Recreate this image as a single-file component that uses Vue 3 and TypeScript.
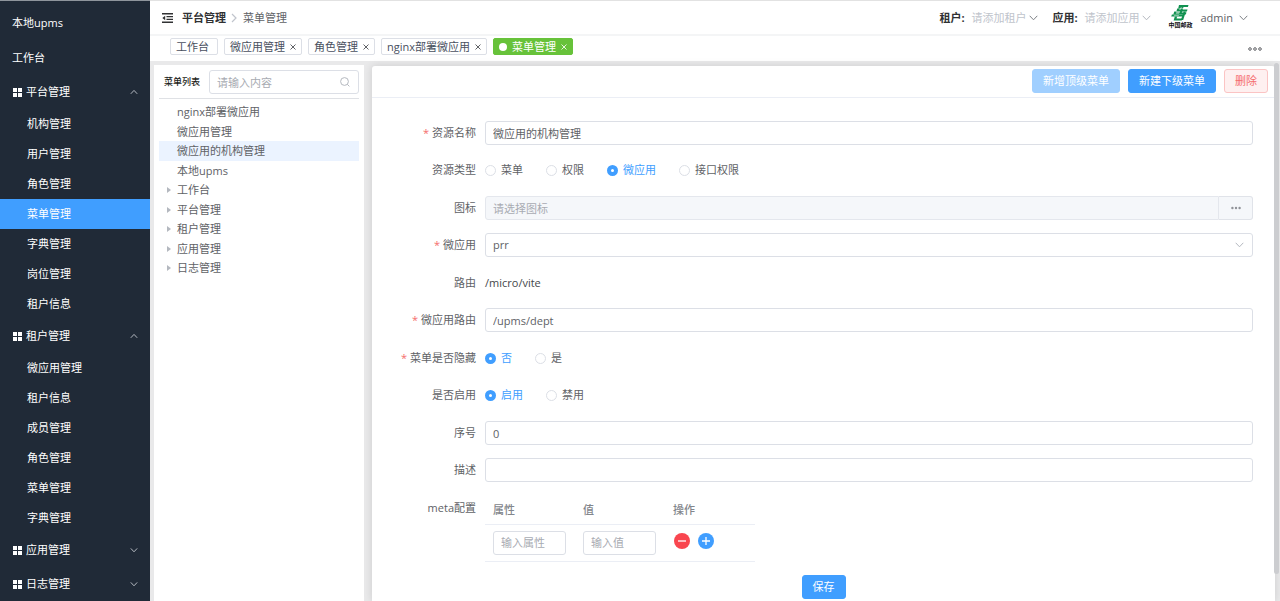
<script setup lang="ts">
import { ref } from 'vue'

interface MenuGroup {
  title: string
  open: boolean
  children: string[]
}

interface TreeItem {
  label: string
  branch: boolean
}

const groups = ref<MenuGroup[]>([
  {
    title: '平台管理',
    open: true,
    children: ['机构管理', '用户管理', '角色管理', '菜单管理', '字典管理', '岗位管理', '租户信息'],
  },
  {
    title: '租户管理',
    open: true,
    children: ['微应用管理', '租户信息', '成员管理', '角色管理', '菜单管理', '字典管理'],
  },
  { title: '应用管理', open: false, children: [] },
  { title: '日志管理', open: false, children: [] },
])

const tabs = ['工作台', '微应用管理', '角色管理', 'nginx部署微应用', '菜单管理']
const activeTab = '菜单管理'

const tree: TreeItem[] = [
  { label: 'nginx部署微应用', branch: false },
  { label: '微应用管理', branch: false },
  { label: '微应用的机构管理', branch: false },
  { label: '本地upms', branch: false },
  { label: '工作台', branch: true },
  { label: '平台管理', branch: true },
  { label: '租户管理', branch: true },
  { label: '应用管理', branch: true },
  { label: '日志管理', branch: true },
]
const selectedNode = ref('微应用的机构管理')

const keyword = ref('')
const name = ref('微应用的机构管理')
const kind = ref('微应用')
const microApp = ref('prr')
const route = ref('/upms/dept')
const hidden = ref('否')
const enabled = ref('启用')
const order = ref('0')
const description = ref('')
const metaKey = ref('')
const metaValue = ref('')
</script>

<template>
  <div class="page">
    <nav class="sidebar">
      <a href="#" class="top-link">本地upms</a>
      <a href="#" class="top-link">工作台</a>
      <div v-for="(group, gi) in groups" :key="group.title">
        <button type="button" class="group-title" @click="group.open = !group.open">
          <svg class="grid-icon" viewBox="0 0 9 9">
            <path d="M0 0h4v4H0zM5 0h4v4H5zM0 5h4v4H0zM5 5h4v4H5z" fill="#fff" />
          </svg>
          <span>{{ group.title }}</span>
          <svg class="group-arrow" viewBox="0 0 8 8">
            <path :d="group.open ? 'M.8 5.8 4 2.4l3.200 3.400' : 'M.8 2.400 4 5.800l3.200-3.400'" />
          </svg>
        </button>
        <template v-if="group.open">
          <a
            v-for="child in group.children"
            :key="child"
            href="#"
            class="sub-link"
            :class="{ active: gi === 0 && child === '菜单管理' }"
            >{{ child }}</a
          >
        </template>
      </div>
    </nav>

    <div class="main">
      <header class="header">
        <button type="button" class="icon-button" aria-label="折叠菜单">
          <svg class="fold-icon" viewBox="0 0 11 10">
            <path d="M0 .8h11M4.500 3.600H11M4.500 6.400H11M0 9.200h11" stroke="#303133" stroke-width="1.400" />
            <path d="M3.200 2.800v4.400L.3 5z" fill="#303133" />
          </svg>
        </button>
        <a href="#" class="crumb-root">平台管理</a>
        <svg class="crumb-sep" viewBox="0 0 6 10"><path d="M1 1l4 4-4 4" /></svg>
        <span class="crumb-leaf">菜单管理</span>

        <div class="header-right">
          <label class="picker tenant">
            <span class="picker-label">租户:</span>
            <select>
              <option>请添加租户</option>
            </select>
            <svg class="chevron" viewBox="0 0 9 6"><path d="M.7.8l3.800 4 3.800-4" /></svg>
          </label>
          <label class="picker app">
            <span class="picker-label">应用:</span>
            <select>
              <option>请添加应用</option>
            </select>
            <svg class="chevron pale" viewBox="0 0 9 6"><path d="M.7.8l3.800 4 3.800-4" /></svg>
          </label>
          <div class="logo">
            <svg viewBox="0 0 18 17">
              <g fill="#119150">
                <path d="M8 0h9.500l-.6 2H10l-.5 1.400H7.200z" />
                <path d="M6.200 3.400h2.300L8.200 4.600h8.300l-.6 1.900H5.400z" />
                <path d="M3.300 6.400h2.200l-.3 1.200h10.300l-.7 2H2.300z" />
                <path d="M.9 9.600h11.900l-.7 2H.2z" />
                <path d="M3.800 11.500h2.300l-.5 2.100h5.800l-.6 2H2.600z" />
                <path d="M10.800.9h2L10.400 9H8.300z" />
                <path d="M12.700 6.500h2.200l-2.700 8.400h-2.300z" />
              </g>
              <path d="M4.900 8.300h3.300M2.900 10.600h5M10 3.400h4.500M6.500 12.500h3.200" stroke="#fff" stroke-width=".5" />
            </svg>
            <span>中国邮政</span>
          </div>
          <button type="button" class="user">
            <span>admin</span>
            <svg class="chevron" viewBox="0 0 9 6"><path d="M.7.8l3.800 4 3.800-4" /></svg>
          </button>
        </div>
      </header>

      <div class="tabs">
        <div v-for="(tab, i) in tabs" :key="tab" class="tab" :class="{ current: tab === activeTab }">
          <i v-if="tab === activeTab" class="dot"></i>
          <a href="#">{{ tab }}</a>
          <button v-if="i > 0" type="button" :aria-label="'关闭' + tab">
            <svg viewBox="0 0 6 6"><path d="M.5.5l5 5M5.500.5l-5 5" /></svg>
          </button>
        </div>
        <button type="button" class="icon-button more" aria-label="更多">
          <svg viewBox="0 0 14 4">
            <circle cx="2" cy="2" r="1.300" /><circle cx="7" cy="2" r="1.300" /><circle cx="12" cy="2" r="1.300" />
          </svg>
        </button>
      </div>

      <div class="content">
        <aside class="tree-panel">
          <div class="tree-head">
            <label for="keyword">菜单列表</label>
            <div class="search">
              <input id="keyword" v-model="keyword" class="field" placeholder="请输入内容" />
              <svg viewBox="0 0 10 10"><circle cx="4.500" cy="4.500" r="3.900" /><path d="M7.300 7.300l2.100 2.100" /></svg>
            </div>
          </div>
          <ul class="tree">
            <li
              v-for="node in tree"
              :key="node.label"
              :class="{ selected: node.label === selectedNode }"
              @click="selectedNode = node.label"
            >
              <span class="caret" :class="{ shown: node.branch }"></span>{{ node.label }}
            </li>
          </ul>
        </aside>

        <section class="card">
          <div class="toolbar">
            <button type="button" class="btn primary" disabled>新增顶级菜单</button>
            <button type="button" class="btn primary">新建下级菜单</button>
            <button type="button" class="btn danger">删除</button>
          </div>

          <form class="form" @submit.prevent>
            <div class="row">
              <label class="label required" for="name">资源名称</label>
              <input id="name" v-model="name" class="field" />
            </div>
            <div class="row">
              <span class="label">资源类型</span>
              <div class="radios">
                <label v-for="k in ['菜单', '权限', '微应用', '接口权限']" :key="k">
                  <input v-model="kind" type="radio" name="kind" :value="k" /><span>{{ k }}</span>
                </label>
              </div>
            </div>
            <div class="row">
              <label class="label" for="icon">图标</label>
              <div class="icon-field">
                <input id="icon" class="field" placeholder="请选择图标" disabled />
                <button type="button" aria-label="选择图标">
                  <svg viewBox="0 0 10 4">
                    <circle cx="1.400" cy="2" r="1.200" /><circle cx="5" cy="2" r="1.200" /><circle cx="8.600" cy="2" r="1.200" />
                  </svg>
                </button>
              </div>
            </div>
            <div class="row">
              <label class="label required" for="micro">微应用</label>
              <div class="select-field">
                <select id="micro" v-model="microApp" class="field">
                  <option>prr</option>
                </select>
                <svg class="chevron pale" viewBox="0 0 9 6"><path d="M.7.8l3.800 4 3.800-4" /></svg>
              </div>
            </div>
            <div class="row">
              <span class="label">路由</span>
              <span class="static">/micro/vite</span>
            </div>
            <div class="row">
              <label class="label required" for="route">微应用路由</label>
              <input id="route" v-model="route" class="field" />
            </div>
            <div class="row">
              <span class="label required">菜单是否隐藏</span>
              <div class="radios">
                <label v-for="h in ['否', '是']" :key="h">
                  <input v-model="hidden" type="radio" name="hidden" :value="h" /><span>{{ h }}</span>
                </label>
              </div>
            </div>
            <div class="row">
              <span class="label">是否启用</span>
              <div class="radios">
                <label v-for="e in ['启用', '禁用']" :key="e">
                  <input v-model="enabled" type="radio" name="enabled" :value="e" /><span>{{ e }}</span>
                </label>
              </div>
            </div>
            <div class="row">
              <label class="label" for="order">序号</label>
              <input id="order" v-model="order" class="field" />
            </div>
            <div class="row">
              <label class="label" for="description">描述</label>
              <input id="description" v-model="description" class="field" />
            </div>
            <div class="row meta-row">
              <span class="label">meta配置</span>
              <table class="meta">
                <thead>
                  <tr>
                    <th>属性</th>
                    <th>值</th>
                    <th>操作</th>
                  </tr>
                </thead>
                <tbody>
                  <tr>
                    <td><input v-model="metaKey" class="field" placeholder="输入属性" aria-label="属性" /></td>
                    <td><input v-model="metaValue" class="field" placeholder="输入值" aria-label="值" /></td>
                    <td>
                      <div class="ops">
                        <button type="button" class="op remove" aria-label="删除行">
                          <svg viewBox="0 0 16 16"><path d="M4 8h8" /></svg>
                        </button>
                        <button type="button" class="op add" aria-label="新增行">
                          <svg viewBox="0 0 16 16"><path d="M4 8h8M8 4v8" /></svg>
                        </button>
                      </div>
                    </td>
                  </tr>
                </tbody>
              </table>
            </div>
            <div class="submit">
              <button type="submit" class="btn primary">保存</button>
            </div>
          </form>
        </section>
        <div class="scroll-thumb"></div>
      </div>
    </div>
  </div>
</template>

<style>
body {
  margin: 0;
}
</style>

<style scoped>
.page {
  display: flex;
  min-height: 100vh;
  box-sizing: border-box;
  font-family: "Open Sans", "Noto Sans CJK SC", sans-serif;
  font-size: 11px;
  line-height: 16px;
  color: #606266;
}
.page *,
.page *::before {
  box-sizing: border-box;
}
a {
  color: inherit;
  text-decoration: none;
}
button,
input,
select {
  font: inherit;
  color: inherit;
  margin: 0;
}
button {
  border: 0;
  padding: 0;
  background: none;
  cursor: pointer;
}
svg {
  display: block;
  flex: none;
}

/* sidebar */
.sidebar {
  flex: none;
  width: 150px;
  padding-top: 4px;
  border-top: 1px solid #8f959c;
  background: #202a37;
  color: #fff;
}
.top-link {
  display: flex;
  align-items: center;
  height: 35px;
  padding-left: 12px;
}
.group-title {
  display: flex;
  align-items: center;
  width: 100%;
  height: 34px;
  padding: 0 12px 0 13px;
  text-align: left;
}
.grid-icon {
  width: 9px;
  height: 9px;
  margin-right: 4px;
}
.group-arrow {
  width: 8px;
  height: 8px;
  margin-left: auto;
}
.group-arrow path {
  fill: none;
  stroke: #b4b9c0;
  stroke-width: 1;
}
.sub-link {
  display: flex;
  align-items: center;
  height: 30px;
  padding-left: 27px;
}
.sub-link.active {
  background: #409eff;
}

/* header */
.main {
  flex: 1;
  min-width: 0;
  display: flex;
  flex-direction: column;
}
.header {
  display: flex;
  align-items: center;
  height: 36px;
  padding: 0 32px 0 12px;
  border-top: 1px solid #e2e2e2;
  border-bottom: 2px solid #f4f5f6;
}
.fold-icon {
  width: 11px;
  height: 10px;
}
.crumb-root {
  margin-left: 9px;
  font-weight: 700;
  color: #303133;
}
.crumb-sep {
  width: 6px;
  height: 10px;
  margin: 0 6px 0 5px;
}
.crumb-sep path {
  fill: none;
  stroke: #c0c4cc;
  stroke-width: 1.200;
}
.header-right {
  display: flex;
  align-items: center;
  margin-left: auto;
}
.picker {
  display: flex;
  align-items: center;
}
.picker-label {
  width: 32px;
  font-weight: 700;
  color: #303133;
}
.picker select {
  width: 58px;
  padding: 0;
  border: 0;
  appearance: none;
  background: none;
  color: #c0c4cc;
}
.tenant {
  margin-right: 14px;
}
.app {
  margin-right: 17px;
}
.chevron {
  width: 9px;
  height: 6px;
}
.chevron path {
  fill: none;
  stroke: #7d8086;
  stroke-width: 1;
}
.chevron.pale path {
  stroke: #b4b8bf;
}
.logo {
  display: flex;
  flex-direction: column;
  align-items: center;
  width: 24px;
  padding-bottom: 2px;
  font-size: 6px;
  line-height: 7px;
  font-weight: 700;
  color: #111;
  white-space: nowrap;
}
.logo svg {
  width: 18px;
  height: 17px;
}
.user {
  display: flex;
  align-items: center;
  gap: 6px;
  margin-left: 8px;
}

/* tabs */
.tabs {
  display: flex;
  align-items: center;
  gap: 6px;
  height: 25px;
  padding: 0 18px 4px 20px;
}
.tab {
  display: flex;
  align-items: center;
  height: 17px;
  padding: 0 5px;
  border: 1px solid #dcdfe6;
  border-radius: 2px;
  color: #495060;
  white-space: nowrap;
}
.tab:first-child {
  padding-right: 8px;
}
.tab a {
  line-height: 15px;
}
.tab button {
  margin-left: 5px;
}
.tab svg {
  width: 6px;
  height: 6px;
}
.tab path {
  stroke: #606266;
  stroke-width: 1;
}
.tab.current {
  border-color: #67c23a;
  background: #67c23a;
  color: #fff;
}
.tab.current path {
  stroke: #e6f5de;
}
.dot {
  width: 8px;
  height: 8px;
  margin-right: 5px;
  border-radius: 50%;
  background: #fff;
}
.more {
  margin-left: auto;
  padding-top: 5px;
}
.more svg {
  width: 14px;
  height: 4px;
}
.more circle {
  fill: none;
  stroke: #606266;
  stroke-width: 1;
}

/* content */
.content {
  position: relative;
  flex: 1;
  display: flex;
  gap: 8px;
  padding: 4px 5px 0 4px;
  background: #e9e9ea;
}
.scroll-thumb {
  position: absolute;
  top: 2px;
  right: 1px;
  bottom: 27px;
  width: 5px;
  border-radius: 3px;
  background: #cccdd0;
}
.field {
  width: 100%;
  height: 24px;
  padding: 0 7px;
  border: 1px solid #dcdfe6;
  border-radius: 3px;
  outline: 0;
  background: #fff;
}
.field::placeholder {
  color: #a8abb2;
  opacity: 1;
}
.tree-panel {
  flex: none;
  width: 210px;
  padding: 5px;
  background: #fff;
}
.tree-head {
  display: flex;
  align-items: center;
  height: 29px;
  padding: 0 0 4px 5px;
  border-bottom: 1px solid #dfe1e5;
}
.tree-head label {
  width: 45px;
  font-size: 9px;
  font-weight: 500;
  color: #1d1e20;
  white-space: nowrap;
}
.search {
  position: relative;
  flex: 1;
}
.search svg {
  position: absolute;
  top: 7px;
  right: 9px;
  width: 10px;
  height: 10px;
  fill: none;
  stroke: #b4b8bf;
  stroke-width: 1;
}
.tree {
  margin: 3px 0 0;
  padding: 0;
  list-style: none;
}
.tree li {
  display: flex;
  align-items: center;
  height: 20px;
  cursor: pointer;
}
.tree li:nth-child(even) {
  height: 19px;
}
.tree li.selected {
  background: #ebf3ff;
}
.caret {
  width: 4px;
  height: 6px;
  margin: 0 6px 0 8px;
}
.caret.shown {
  border: solid transparent;
  border-width: 3px 0 3px 4px;
  border-left-color: #b4b8bf;
}

/* card */
.card {
  flex: 1;
  min-width: 0;
  margin-top: 1px;
  border-radius: 3px 3px 0 0;
  background: #fff;
  box-shadow: 0 0 8px rgba(0, 0, 0, 0.12);
}
.toolbar {
  display: flex;
  justify-content: flex-end;
  gap: 8px;
  height: 32px;
  padding: 3px 7px 0 0;
  border-bottom: 1px solid #ebeef5;
}
.btn {
  height: 24px;
  padding: 0 10px;
  border: 1px solid #409eff;
  border-radius: 3px;
  white-space: nowrap;
}
.primary {
  background: #409eff;
  color: #fff;
}
.primary:disabled {
  border-color: #a0cfff;
  background: #a0cfff;
}
.danger {
  border-color: #fbc4c4;
  background: #fef0f0;
  color: #f56c6c;
}
.form {
  padding: 23px 22px 2px 0;
}
.row {
  display: flex;
  align-items: center;
  height: 24px;
  margin-bottom: 13px;
}
.row:nth-child(even) {
  margin-bottom: 14px;
}
.label {
  flex: none;
  width: 113px;
  padding-right: 9px;
  text-align: right;
  line-height: 24px;
}
.required::before {
  content: "*";
  margin-right: 3px;
  color: #f56c6c;
}
.radios {
  display: flex;
  gap: 23px;
}
.radios label {
  display: flex;
  align-items: center;
  gap: 5px;
}
.radios input {
  width: 11px;
  height: 11px;
  border: 1px solid #dcdfe6;
  border-radius: 50%;
  appearance: none;
  background: #fff;
}
.radios input:checked {
  border: 4px solid #409eff;
}
.radios input:checked + span {
  color: #409eff;
}
.icon-field {
  flex: 1;
  display: flex;
}
.icon-field .field {
  flex: 1;
  border-color: #e4e7ed;
  border-radius: 3px 0 0 3px;
  background: #f5f7fa;
}
.icon-field button {
  display: flex;
  align-items: center;
  justify-content: center;
  width: 34px;
  height: 24px;
  border: 1px solid #e0e3e9;
  border-left: 0;
  border-radius: 0 3px 3px 0;
  background: #f5f7fa;
}
.icon-field svg {
  width: 10px;
  height: 4px;
  fill: #909399;
}
.select-field {
  position: relative;
  flex: 1;
}
.select-field select {
  appearance: none;
}
.select-field .chevron {
  position: absolute;
  top: 9px;
  right: 9px;
}
.static {
  color: #45474b;
}
.meta-row {
  align-items: flex-start;
  height: auto;
}
.meta {
  width: 270px;
  border-collapse: collapse;
  table-layout: fixed;
}
.meta th,
.meta td {
  padding: 0 9px 0 8px;
  border-bottom: 1px solid #ebeef5;
  text-align: left;
}
.meta th {
  height: 28px;
  font-weight: 500;
  color: #83868c;
}
.meta td {
  height: 37px;
}
.meta .field {
  display: block;
}
.ops {
  display: flex;
  gap: 8px;
  padding: 0 0 4px 1px;
}
.op {
  width: 16px;
  height: 16px;
  border-radius: 50%;
}
.op.remove {
  background: #f9464f;
}
.op.add {
  background: #409eff;
}
.op path {
  stroke: #fff;
  stroke-width: 1.300;
}
.submit {
  display: flex;
  justify-content: center;
  padding-left: 22px;
}
</style>
